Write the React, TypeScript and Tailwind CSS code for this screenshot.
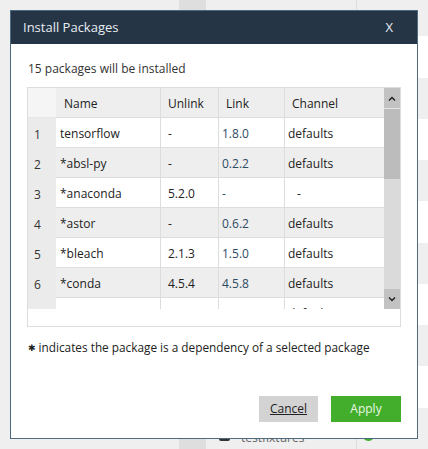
import React from "react";

const font = { fontFamily: '"Open Sans", "DejaVu Sans", sans-serif' };

type Row = { n: string; name: string; unlink: string; link: string; channel: string; indent?: boolean };

const rows: Row[] = [
  { n: "1", name: "tensorflow", unlink: "-", link: "1.8.0", channel: "defaults" },
  { n: "2", name: "*absl-py", unlink: "-", link: "0.2.2", channel: "defaults" },
  { n: "3", name: "*anaconda", unlink: "5.2.0", link: "-", channel: "-", indent: true },
  { n: "4", name: "*astor", unlink: "-", link: "0.6.2", channel: "defaults" },
  { n: "5", name: "*bleach", unlink: "2.1.3", link: "1.5.0", channel: "defaults" },
  { n: "6", name: "*conda", unlink: "4.5.4", link: "4.5.8", channel: "defaults" },
  { n: "", name: "", unlink: "", link: "", channel: "defaults" },
];

function Background() {
  const bands = [
    "bg-white", "bg-[#efefef]", "bg-white", "bg-[#efefef]", "bg-white", "bg-[#efefef]", "bg-white", "bg-[#efefef]", "bg-white", "bg-[#efefef]",
  ];
  return (
    <div className="flex h-[449px] w-[428px] bg-[#efefef]">
      <div className="w-[179px]" />
      <div className="w-[27px] bg-[#dedede]" />
      <div className="flex w-[151px] flex-col border-r border-[#dddddd]">
        <div className="flex-1" />
        <div className="flex h-[20px] items-start gap-[11px] pl-[13px] pt-[2px] text-[12px] leading-[14px] text-[#666]">
          <span className="h-[10px] w-[11px] rounded-[2px] border-2 border-[#333]" />
          <span>testfixtures</span>
        </div>
      </div>
      <div className="flex flex-1 flex-col">
        <div className="h-[37px]" />
        {bands.map((b, i) => (
          <div key={i} className={`h-[42px] ${b}`} />
        ))}
      </div>
    </div>
  );
}

function Cell({ children, className = "" }: { children?: React.ReactNode; className?: string }) {
  return (
    <div className={`flex h-[30px] items-center border-r border-b border-[#dddddd] pt-[3px] ${className}`}>{children}</div>
  );
}

export default function App() {
  return (
    <div className="relative h-[449px] w-[428px] overflow-hidden" style={font}>
      <Background />
      <div className="absolute left-[362px] top-[428px] h-[13px] w-[13px] rounded-full border-2 border-[#3fae2a]" />
      <div className="absolute left-[10px] top-[10px] flex h-[429px] w-[408px] flex-col border border-[#4d6a80] bg-white">
        <div className="flex h-[33px] shrink-0 items-center justify-between bg-[#253546] pl-[12px] pr-[24px] text-[13px] text-[#e8edf2]">
          <span>Install Packages</span>
          <span>X</span>
        </div>
        <div className="pl-[17px] pt-[16px] text-[12px] leading-[17px] text-[#333]">15 packages will be installed</div>
        <div className="ml-[16px] mt-[10px] h-[240px] w-[374px] border border-[#dddddd] bg-white">
          <div className="flex h-[221px] overflow-hidden">
            <div className="flex w-[356px] flex-col text-[12px] text-[#222]">
              <div className="grid grid-cols-[28px_105px_58px_66px_99px] bg-[#eeeeee]">
                <Cell className="bg-[#f5f5f5] border-r-0 border-b-[#e8e8e8]" />
                <Cell className="pl-[8px]">Name</Cell>
                <Cell className="pl-[7px]">Unlink</Cell>
                <Cell className="pl-[7px]">Link</Cell>
                <Cell className="pl-[7px] border-r-0">Channel</Cell>
              </div>
              {rows.map((r, i) => (
                <div
                  key={i}
                  className={`grid grid-cols-[28px_105px_58px_66px_99px] ${i % 2 === 1 ? "bg-[#eeeeee]" : "bg-white"}`}
                >
                  <div className="flex h-[30px] items-center bg-[#ebebeb] pl-[6px] pt-[3px] text-[#333]">{r.n}</div>
                  <Cell className="pl-[4px]">{r.name}</Cell>
                  <Cell className="pl-[7px]">{r.unlink}</Cell>
                  <Cell className="pl-[3px] text-[#2d4a63]">{r.link}</Cell>
                  <Cell className={`${r.indent ? "pl-[12px]" : "pl-[3px]"} border-r-0`}>{r.channel}</Cell>
                </div>
              ))}
            </div>
            <div className="flex w-[16px] flex-col bg-[#dadada]">
              <div className="flex h-[21px] items-center justify-center border-b border-[#e4e4e4] bg-[#c2c2c2]">
                <svg width="8" height="5" viewBox="0 0 8 5">
                  <path d="M1 4.5 L4 1.5 L7 4.5" fill="none" stroke="#222" strokeWidth="1.5" />
                </svg>
              </div>
              <div className="h-[70px] bg-[#bcbcbc]" />
              <div className="flex-1" />
              <div className="flex h-[20px] items-center justify-center bg-[#c2c2c2]">
                <svg width="8" height="5" viewBox="0 0 8 5">
                  <path d="M1 0.5 L4 3.5 L7 0.5" fill="none" stroke="#222" strokeWidth="1.5" />
                </svg>
              </div>
            </div>
          </div>
        </div>
        <div className="flex items-center pl-[17px] pt-[12px] text-[11.8px] leading-[17px] text-[#222]">
          <span className="mr-[3px] text-[9px] font-bold">✱</span>
          <span>indicates the package is a dependency of a selected package</span>
        </div>
        <div className="flex-1" />
        <div className="flex justify-end gap-[13px] pb-[16px] pr-[16px] text-[12px]">
          <button className="flex h-[26px] w-[59px] items-center justify-center bg-[#d3d3d3] text-[#222] underline">
            Cancel
          </button>
          <button className="flex h-[26px] w-[70px] items-center justify-center bg-[#43ae2b] text-[#eaf6e4]">
            Apply
          </button>
        </div>
      </div>
    </div>
  );
}
